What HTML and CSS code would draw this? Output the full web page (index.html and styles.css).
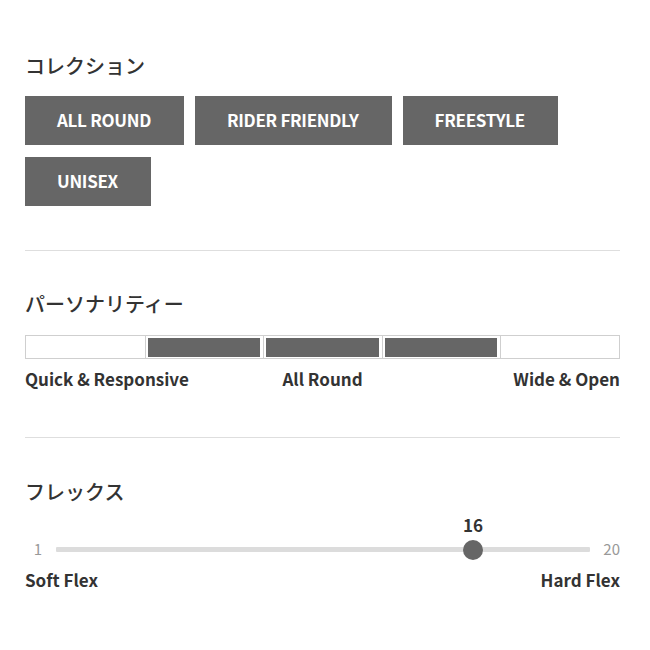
FILE: index.html
```html
<!DOCTYPE html>
<html lang="ja">
<head>
<meta charset="utf-8">
<link rel="stylesheet" href="styles.css">
</head>
<body>
<div class="page">
  <section class="sec sec-first">
    <h2 class="title">コレクション</h2>
    <div class="tags">
      <span class="tag">ALL ROUND</span>
      <span class="tag">RIDER FRIENDLY</span>
      <span class="tag">FREESTYLE</span>
      <span class="tag">UNISEX</span>
    </div>
  </section>
  <hr class="divider">
  <section class="sec">
    <h2 class="title">パーソナリティー</h2>
    <div class="bar">
      <div class="cell"></div>
      <div class="cell on"></div>
      <div class="cell on"></div>
      <div class="cell on"></div>
      <div class="cell"></div>
    </div>
    <div class="labels">
      <span>Quick &amp; Responsive</span>
      <span class="mid">All Round</span>
      <span class="end">Wide &amp; Open</span>
    </div>
  </section>
  <hr class="divider divider-2">
  <section class="sec">
    <h2 class="title">フレックス</h2>
    <div class="slider">
      <span class="num min">1</span>
      <div class="track">
        <div class="thumb" style="left: 78.1%;">
          <span class="value">16</span>
        </div>
      </div>
      <span class="num max">20</span>
    </div>
    <div class="labels two">
      <span>Soft Flex</span>
      <span class="end">Hard Flex</span>
    </div>
  </section>
</div>
</body>
</html>
```
FILE: styles.css
```css
* { box-sizing: border-box; }
html, body {
  margin: 0;
  padding: 0;
  background: #fff;
}
body {
  font-family: "Noto Sans CJK JP", "Noto Sans", sans-serif;
  color: #333;
}
.page {
  width: 650px;
  padding: 52px 30px 0 25px;
}
.title {
  margin: 0;
  font-size: 20px;
  line-height: 28px;
  font-weight: 500;
  color: #333;
}
.tags {
  margin-top: 16px;
  display: flex;
  flex-wrap: wrap;
  column-gap: 11px;
  row-gap: 12px;
}
.tag {
  display: block;
  height: 49px;
  line-height: 48px;
  padding: 0 33px 0 32px;
  background: #666;
  color: #fff;
  font-size: 17px;
  font-weight: 700;
  letter-spacing: -0.3px;
}
.divider {
  margin: 44px 0 0;
  border: 0;
  border-top: 1px solid #dedede;
  height: 0;
}
.divider.divider-2 {
  margin-top: 47px;
}
.divider + .sec {
  padding-top: 39px;
}
.divider-2 + .sec {
  padding-top: 40px;
}
.bar {
  margin-top: 17px;
  height: 24px;
  border: 1px solid #cfcfcf;
  display: grid;
  grid-template-columns: repeat(5, 1fr);
}
.cell {
  border-left: 1px solid #cfcfcf;
  padding: 2px 3px 1px 2px;
}
.cell:first-child { border-left: 0; }
.cell.on::before {
  content: "";
  display: block;
  height: 100%;
  background: #666;
}
.labels {
  margin-top: 9px;
  display: grid;
  grid-template-columns: 1fr auto 1fr;
  font-size: 17px;
  line-height: 22px;
  font-weight: 700;
  color: #333;
}
.labels .mid { text-align: center; }
.labels .end { text-align: right; }
.labels.two {
  grid-template-columns: 1fr 1fr;
  margin-top: 10px;
}
.slider {
  margin-top: 33px;
  display: grid;
  grid-template-columns: 26px 1fr 30px;
  align-items: center;
  height: 20px;
}
.num {
  font-size: 15px;
  line-height: 20px;
  color: #999;
}
.num.min { text-align: center; }
.num.max { text-align: right; }
.track {
  position: relative;
  margin-left: 5px;
  height: 5px;
  background: #dcdcdc;
  border-radius: 1px;
}
.thumb {
  position: absolute;
  top: 50%;
  width: 20px;
  height: 20px;
  margin: -9px 0 0 -10px;
  border-radius: 50%;
  background: #666;
}
.value {
  position: absolute;
  left: 50%;
  bottom: 100%;
  transform: translateX(-50%);
  margin-bottom: 4px;
  font-size: 17px;
  line-height: 22px;
  font-weight: 700;
  color: #333;
}
```
